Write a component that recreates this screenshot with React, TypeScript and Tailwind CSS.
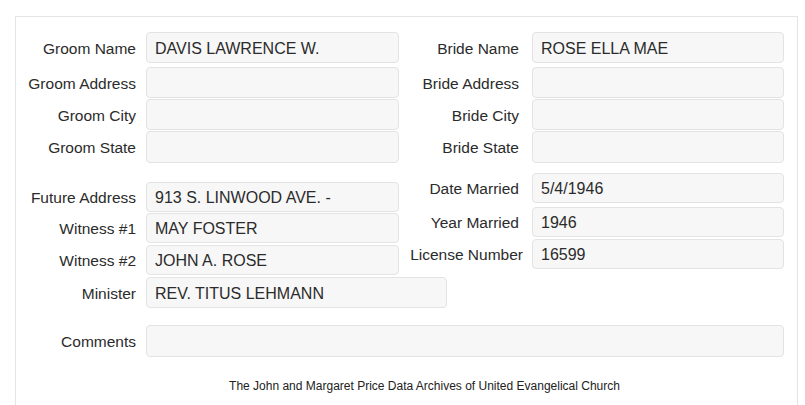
import React from 'react';

const Field = ({ label, value = '', labelW = 'w-[120px]', inputW = 'w-[253px]', gap = 'ml-[10px]', h = 'h-[31px]', className = '' }: {
  label: string; value?: string; labelW?: string; inputW?: string; gap?: string; h?: string; className?: string;
}) => (
  <div className={`flex items-center ${className}`}>
    <div className={`${labelW} shrink-0 pt-[2px] text-right text-[15.5px] whitespace-nowrap`}>{label}</div>
    <div className={`${gap} ${inputW} ${h} shrink-0 flex items-center pl-[8px] pt-[2px] bg-[#f7f7f7] border border-[#e3e3e3] rounded-[4px]`}>
      {value}
    </div>
  </div>
);

export default function App() {
  return (
    <div className="min-h-screen bg-white pl-[15px] pt-[16px] text-[16px] text-[#2b2b2b] overflow-hidden" style={{ fontFamily: '"Liberation Sans", Arial, sans-serif' }}>
      <div className="w-[783px] h-[400px] border-t border-l border-r border-[#e5e5e5] pt-[15px]">
        <div className="flex">
          <div className="flex flex-col w-[383px]">
            <Field label="Groom Name" value="DAVIS LAWRENCE W." />
            <Field label="Groom Address" className="mt-[4px]" />
            <Field label="Groom City" className="mt-[1px]" />
            <Field label="Groom State" className="mt-[1px]" h="h-[32px]" />
          </div>
          <div className="flex flex-col">
            <Field label="Bride Name" value="ROSE ELLA MAE" inputW="w-[252px]" gap="ml-[13px]" />
            <Field label="Bride Address" inputW="w-[252px]" gap="ml-[13px]" className="mt-[4px]" />
            <Field label="Bride City" inputW="w-[252px]" gap="ml-[13px]" className="mt-[1px]" />
            <Field label="Bride State" inputW="w-[252px]" gap="ml-[13px]" className="mt-[1px]" h="h-[32px]" />
          </div>
        </div>
        <div className="flex items-start">
          <div className="flex flex-col w-[383px] mt-[19px]">
            <Field label="Future Address" value="913 S. LINWOOD AVE. -" h="h-[30px]" />
            <Field label="Witness #1" value="MAY FOSTER" h="h-[30px]" className="mt-[1px]" />
            <Field label="Witness #2" value="JOHN A. ROSE" h="h-[30px]" className="mt-[2px]" />
            <Field label="Minister" value="REV. TITUS LEHMANN" inputW="w-[301px]" className="mt-[2px]" />
          </div>
          <div className="flex flex-col mt-[10px]">
            <Field label="Date Married" value="5/4/1946" inputW="w-[252px]" gap="ml-[13px]" h="h-[30px]" />
            <Field label="Year Married" value="1946" inputW="w-[252px]" gap="ml-[13px]" h="h-[30px]" className="mt-[4px]" />
            <Field label="License Number" value="16599" inputW="w-[252px]" labelW="w-[124px]" gap="ml-[9px]" h="h-[30px]" className="mt-[2px]" />
          </div>
        </div>
        <Field label="Comments" inputW="w-[638px]" h="h-[32px]" className="mt-[17px]" />
        <div className="mt-[20px] pl-[36px] text-center text-[12px] text-[#222]">
          The John and Margaret Price Data Archives of United Evangelical Church
        </div>
      </div>
    </div>
  );
}
